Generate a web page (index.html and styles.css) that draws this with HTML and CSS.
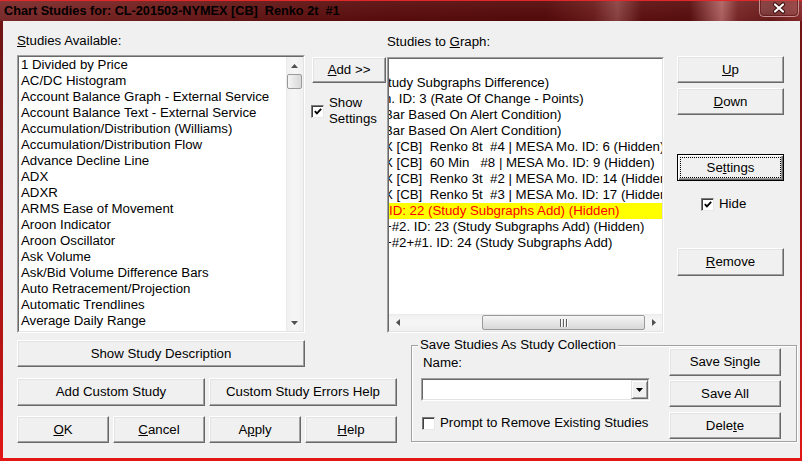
FILE: index.html
```html
<!DOCTYPE html>
<html>
<head>
<meta charset="utf-8">
<title>Chart Studies</title>
<link rel="stylesheet" href="styles.css">
</head>
<body>
<div class="window">
  <div class="titlebar">
    <span class="title">Chart Studies for: CL-201503-NYMEX [CB]  Renko 2t  #1</span>
    <div class="close">
      <svg width="40" height="17" viewBox="0 0 40 17">
        <defs>
          <linearGradient id="cg" x1="0" y1="0" x2="0" y2="1">
            <stop offset="0" stop-color="#b06060" stop-opacity="0.35"/>
            <stop offset="1" stop-color="#ffffff" stop-opacity="0.08"/>
          </linearGradient>
        </defs>
        <path d="M0.5 0 V12.5 Q0.5 16.5 4.5 16.5 H35.5 Q39.5 16.5 39.5 12.5 V0" fill="url(#cg)" stroke="#c89090" stroke-width="1"/>
        <path d="M1.5 0 V12.3 Q1.5 15.5 4.7 15.5 H35.3 Q38.5 15.5 38.5 12.3 V0" fill="none" stroke="#5a1010" stroke-opacity="0.6" stroke-width="1"/>
        <path d="M16 4.5 L24 11.5 M24 4.5 L16 11.5" stroke="#3a0808" stroke-width="4.2" stroke-linecap="round"/>
        <path d="M16 4.5 L24 11.5 M24 4.5 L16 11.5" stroke="#ffffff" stroke-width="2.3" stroke-linecap="round"/>
      </svg>
    </div>
  </div>

  <div class="client">
    <div class="top">
      <div class="col-avail">
        <div class="label lbl-left"><u>S</u>tudies Available:</div>
        <div class="listbox lb-left">
          <div class="lb-inner">
            <div class="items">
              <div class="item">1 Divided by Price</div>
              <div class="item">AC/DC Histogram</div>
              <div class="item">Account Balance Graph - External Service</div>
              <div class="item">Account Balance Text - External Service</div>
              <div class="item">Accumulation/Distribution (Williams)</div>
              <div class="item">Accumulation/Distribution Flow</div>
              <div class="item">Advance Decline Line</div>
              <div class="item">ADX</div>
              <div class="item">ADXR</div>
              <div class="item">ARMS Ease of Movement</div>
              <div class="item">Aroon Indicator</div>
              <div class="item">Aroon Oscillator</div>
              <div class="item">Ask Volume</div>
              <div class="item">Ask/Bid Volume Difference Bars</div>
              <div class="item">Auto Retracement/Projection</div>
              <div class="item">Automatic Trendlines</div>
              <div class="item">Average Daily Range</div>
              <div class="item">Average True Range</div>
            </div>
            <div class="vscroll">
              <div class="sb-btn">
                <svg width="7" height="4" viewBox="0 0 7 4"><path d="M3.5 0 L7 4 L0 4 Z" fill="#505050"/></svg>
              </div>
              <div class="vthumb"></div>
              <div class="sb-fill"></div>
              <div class="sb-btn">
                <svg width="7" height="4" viewBox="0 0 7 4"><path d="M0 0 L7 0 L3.5 4 Z" fill="#505050"/></svg>
              </div>
            </div>
          </div>
        </div>
      </div>

      <div class="col-mid">
        <div class="btn btn-add"><span><u>A</u>dd &gt;&gt;</span></div>
        <div class="chk chk-show">
          <span class="box">
            <svg width="11" height="11" viewBox="0 0 11 11"><path d="M2 5 L4.3 7.6 L9 2.6" fill="none" stroke="#000" stroke-width="2"/></svg>
          </span>
          <span class="chk-text">Show<br>Settings</span>
        </div>
      </div>

      <div class="col-graph">
        <div class="label lbl-right">Studies to <u>G</u>raph:</div>
        <div class="listbox lb-right">
          <div class="lb-inner lb-inner-col">
            <div class="rows">
              <div class="grow"></div>
              <div class="grow"><span class="c1">tudy Subgraphs Difference)</span></div>
              <div class="grow"><span class="c5">n. ID: 3 (Rate Of Change - Points)</span></div>
              <div class="grow"><span class="c5">Bar Based On Alert Condition)</span></div>
              <div class="grow"><span class="c5">Bar Based On Alert Condition)</span></div>
              <div class="grow"><span class="c5">X [CB]  Renko 8t  #4 | MESA Mo. ID: 6 (Hidden)</span></div>
              <div class="grow"><span class="c5">X [CB]  60 Min   #8 | MESA Mo. ID: 9 (Hidden)</span></div>
              <div class="grow"><span class="c5">X [CB]  Renko 3t  #2 | MESA Mo. ID: 14 (Hidden)</span></div>
              <div class="grow"><span class="c5">X [CB]  Renko 5t  #3 | MESA Mo. ID: 17 (Hidden)</span></div>
              <div class="grow sel"><span>ID: 22 (Study Subgraphs Add) (Hidden)</span></div>
              <div class="grow"><span class="c5">+#2. ID: 23 (Study Subgraphs Add) (Hidden)</span></div>
              <div class="grow"><span class="c5">+#2+#1. ID: 24 (Study Subgraphs Add)</span></div>
            </div>
            <div class="hscroll">
              <div class="sb-btn sb-h">
                <svg width="4" height="7" viewBox="0 0 4 7"><path d="M4 0 L4 7 L0 3.5 Z" fill="#505050"/></svg>
              </div>
              <div class="hthumb">
                <svg width="8" height="8" viewBox="0 0 8 8">
                  <path d="M0.5 0 V8 M3.5 0 V8 M6.5 0 V8" stroke="#606060" stroke-width="1"/>
                  <path d="M1.5 0 V8 M4.5 0 V8 M7.5 0 V8" stroke="#ffffff" stroke-width="1"/>
                </svg>
              </div>
              <div class="sb-btn sb-h">
                <svg width="4" height="7" viewBox="0 0 4 7"><path d="M0 0 L4 3.5 L0 7 Z" fill="#505050"/></svg>
              </div>
            </div>
          </div>
        </div>
      </div>

      <div class="col-btns">
        <div class="btn btn-up"><span><u>U</u>p</span></div>
        <div class="btn btn-down"><span><u>D</u>own</span></div>
        <div class="btn btn-default btn-settings"><span>Se<u>t</u>tings</span></div>
        <div class="chk chk-hide">
          <span class="box">
            <svg width="11" height="11" viewBox="0 0 11 11"><path d="M2 5 L4.3 7.6 L9 2.6" fill="none" stroke="#000" stroke-width="2"/></svg>
          </span>
          <span class="chk-text">Hide</span>
        </div>
        <div class="btn btn-remove"><span><u>R</u>emove</span></div>
      </div>
    </div>

    <div class="bottom">
      <div class="bl">
        <div class="btn btn-desc"><span>Show Study Description</span></div>
        <div class="row2">
          <div class="btn"><span>Add Custom Study</span></div>
          <div class="btn"><span>Custom Study Errors Help</span></div>
        </div>
        <div class="row3">
          <div class="btn"><span><u>O</u>K</span></div>
          <div class="btn"><span><u>C</u>ancel</span></div>
          <div class="btn"><span>A<u>p</u>ply</span></div>
          <div class="btn"><span><u>H</u>elp</span></div>
        </div>
      </div>

      <div class="group">
        <span class="legend">Save Studies As Study Collection</span>
        <div class="g-left">
          <div class="name-lbl">Name:</div>
          <div class="combo">
            <div class="combo-inner">
              <div class="combo-field"></div>
              <div class="combo-btn">
                <svg width="7" height="4" viewBox="0 0 7 4"><path d="M0 0 L7 0 L3.5 4 Z" fill="#000"/></svg>
              </div>
            </div>
          </div>
          <div class="chk chk-prompt">
            <span class="box"></span>
            <span class="chk-text">Prompt to Remove Existing Studies</span>
          </div>
        </div>
        <div class="g-right">
          <div class="btn btn-single"><span>Save S<u>i</u>ngle</span></div>
          <div class="btn btn-all"><span>Save All</span></div>
          <div class="btn btn-delete"><span>Dele<u>t</u>e</span></div>
        </div>
      </div>
    </div>
  </div>
</div>
</body>
</html>
```

FILE: styles.css
```css
* { box-sizing: border-box; }

html, body {
  margin: 0;
  padding: 0;
}

body {
  width: 802px;
  height: 461px;
  overflow: hidden;
  font-family: "Liberation Sans", Arial, sans-serif;
  font-size: 13.25px;
  color: #000;
  background: #c01212;
}

.window {
  width: 802px;
  height: 461px;
  display: flex;
  flex-direction: column;
  background: linear-gradient(to bottom, #6a1414 0%, #8c1616 40%, #c41414 85%, #e41616 100%);
}

/* ---------- title bar ---------- */
.titlebar {
  height: 21px;
  flex: none;
  display: flex;
  align-items: flex-start;
  border-top: 1px solid #e02828;
  background:
    linear-gradient(to bottom, rgba(255,255,255,0.06), rgba(0,0,0,0.05)),
    linear-gradient(90deg, #7d2a2a 0%, #74201f 15%, #651515 30%, #5a0c0c 48%, #560909 68%, #6c1c1c 74%, #8c4242 77%, #5e1010 80%, #5a0d0d 86%, #b06262 90%, #7a2626 92%, #6a1b1b 96%, #8a2a2a 100%);
}

.title {
  padding: 1px 0 0 4px;
  line-height: 19px;
  font-size: 12.7px;
  font-weight: bold;
  white-space: pre;
  color: #000;
}

.close {
  margin: -1px 3px 0 auto;
  width: 40px;
  height: 17px;
}

.close svg { display: block; }

/* ---------- client ---------- */
.client {
  flex: 1;
  margin: 0 2px 3px 3px;
  background: #f0f0f0;
  padding: 12px 0 0 14px;
  display: flex;
  flex-direction: column;
}

.top {
  display: flex;
  align-items: flex-start;
}

.label {
  height: 16px;
  line-height: 16px;
  white-space: nowrap;
}

.lbl-left { margin-bottom: 6px; }
.lbl-right { margin-bottom: 7px; }

/* ---------- list boxes ---------- */
.listbox {
  background: #fff;
  border: 1px solid;
  border-color: #a0a0a0 #ffffff #ffffff #a0a0a0;
}

.lb-inner {
  height: 100%;
  border: 1px solid;
  border-color: #696969 #e3e3e3 #e3e3e3 #696969;
  display: flex;
}

.lb-inner-col { flex-direction: column; }

.col-avail { width: 288px; flex: none; }

.lb-left { height: 278px; }

.items {
  flex: 1;
  overflow: hidden;
  padding-left: 2px;
  line-height: 16px;
  white-space: nowrap;
}

.item { height: 16px; }

.vscroll {
  width: 17px;
  flex: none;
  display: flex;
  flex-direction: column;
  background: linear-gradient(to right, #e4e4e4 0, #f0f0f0 1px, #f6f6f6 50%, #f0f0f0 100%);
}

.sb-btn {
  height: 17px;
  flex: none;
  display: flex;
  align-items: center;
  justify-content: center;
}

.sb-btn svg { display: block; }

.sb-h {
  width: 17px;
  height: 17px;
}

.vthumb {
  height: 15px;
  margin: 0 1px 0 1px;
  flex: none;
  border: 1px solid #9a9a9a;
  border-radius: 2px;
  background: linear-gradient(to right, #f6f6f6, #e6e6e6 50%, #d8d8d8);
}

.sb-fill { flex: 1; }

/* ---------- middle column ---------- */
.col-mid {
  width: 74px;
  flex: none;
  margin-left: 7px;
}

.btn {
  display: flex;
  align-items: center;
  justify-content: center;
  height: 27px;
  background: #f0f0f0;
  border: 1px solid;
  border-color: #ffffff #696969 #696969 #ffffff;
  box-shadow: inset -1px -1px 0 #a0a0a0, inset 1px 1px 0 #e3e3e3;
  white-space: nowrap;
  line-height: 16px;
}

.btn-add {
  margin-top: 24px;
  height: 26px;
}

.chk {
  display: flex;
  align-items: center;
  line-height: 16px;
}

.box {
  width: 13px;
  height: 13px;
  flex: none;
  background: #fff;
  border: 1px solid;
  border-color: #7a7a7a #e8e8e8 #e8e8e8 #7a7a7a;
  box-shadow: inset 1px 1px 0 #404040;
  display: flex;
  align-items: center;
  justify-content: center;
}

.box svg { display: block; margin: 1px 0 0 1px; }

.chk-text { margin-left: 5px; white-space: nowrap; }

.chk-show {
  margin-top: 12px;
  margin-left: -1px;
}

/* ---------- right list ---------- */
.col-graph {
  width: 277px;
  flex: none;
  margin-left: 1px;
  padding-top: 1px;
}

.lb-right { height: 276px; }

.rows {
  flex: 1;
  overflow: hidden;
  line-height: 16px;
}

.grow {
  height: 16px;
  overflow: hidden;
  white-space: pre;
}

.grow span { display: inline-block; }

.c1 { margin-left: -1px; }
.c5 { margin-left: -5px; }

.sel {
  background: #ffff00;
  color: #ff0000;
}

.hscroll {
  height: 17px;
  flex: none;
  display: flex;
  background: linear-gradient(to bottom, #e4e4e4 0, #f0f0f0 1px, #f6f6f6 50%, #f0f0f0 100%);
}

.hthumb {
  flex: 1;
  margin: 1px 0 1px 76px;
  border: 1px solid #9a9a9a;
  border-radius: 2px;
  background: linear-gradient(to bottom, #f6f6f6, #e6e6e6 50%, #d8d8d8);
  display: flex;
  align-items: center;
  justify-content: center;
}

.hthumb svg { display: block; }

/* ---------- right buttons ---------- */
.col-btns {
  width: 107px;
  flex: none;
  margin-left: 13px;
  padding-top: 23px;
}

.btn-down { margin-top: 5px; }

.btn-settings { margin-top: 39px; }

.btn-default {
  border: 1px solid #000;
  box-shadow: inset 1px 1px 0 #ffffff, inset -1px -1px 0 #696969, inset -2px -2px 0 #a0a0a0;
  outline: 1px dotted #000;
  outline-offset: -4px;
}

.chk-hide {
  margin-top: 15px;
  height: 16px;
  padding-left: 24px;
}

.btn-remove {
  margin-top: 36px;
  height: 28px;
}

/* ---------- bottom ---------- */
.bottom {
  display: flex;
  align-items: flex-start;
  margin-top: 7px;
}

.bl {
  width: 380px;
  flex: none;
  display: flex;
  flex-direction: column;
}

.btn-desc { width: 288px; }

.row2 {
  margin-top: 11px;
  display: grid;
  grid-template-columns: 1fr 1fr;
  gap: 4px;
}

.row2 .btn { height: 28px; }

.row3 {
  margin-top: 10px;
  display: grid;
  grid-template-columns: repeat(4, 1fr);
  gap: 4px;
}

.group {
  position: relative;
  margin: 5px 0 0 14px;
  width: 386px;
  height: 97px;
  border: 1px solid #a0a0a0;
  box-shadow: inset 1px 1px 0 #ffffff, 1px 1px 0 #ffffff;
  padding: 2px 15px 0 9px;
  display: flex;
  align-items: flex-start;
}

.legend {
  position: absolute;
  top: -9px;
  left: 6px;
  padding: 0 2px;
  line-height: 16px;
  background: #f0f0f0;
  white-space: nowrap;
}

.g-left {
  width: 229px;
  flex: none;
}

.name-lbl {
  margin-top: 7px;
  padding-left: 2px;
  line-height: 16px;
  height: 16px;
}

.combo {
  margin-top: 7px;
  height: 23px;
  background: #fff;
  border: 1px solid;
  border-color: #a0a0a0 #ffffff #ffffff #a0a0a0;
}

.combo-inner {
  height: 100%;
  border: 1px solid;
  border-color: #696969 #e3e3e3 #e3e3e3 #696969;
  display: flex;
}

.combo-field { flex: 1; }

.combo-btn {
  width: 17px;
  flex: none;
  background: #f0f0f0;
  border: 1px solid;
  border-color: #e3e3e3 #696969 #696969 #e3e3e3;
  box-shadow: inset 1px 1px 0 #ffffff, inset -1px -1px 0 #a0a0a0;
  display: flex;
  align-items: center;
  justify-content: center;
}

.combo-btn svg { display: block; }

.chk-prompt {
  margin-top: 14px;
  height: 16px;
  padding-left: 1px;
}

.g-right {
  width: 112px;
  flex: none;
  margin-left: 19px;
}

.btn-single { height: 28px; }
.btn-all { margin-top: 4px; }
.btn-delete { margin-top: 5px; }
```
